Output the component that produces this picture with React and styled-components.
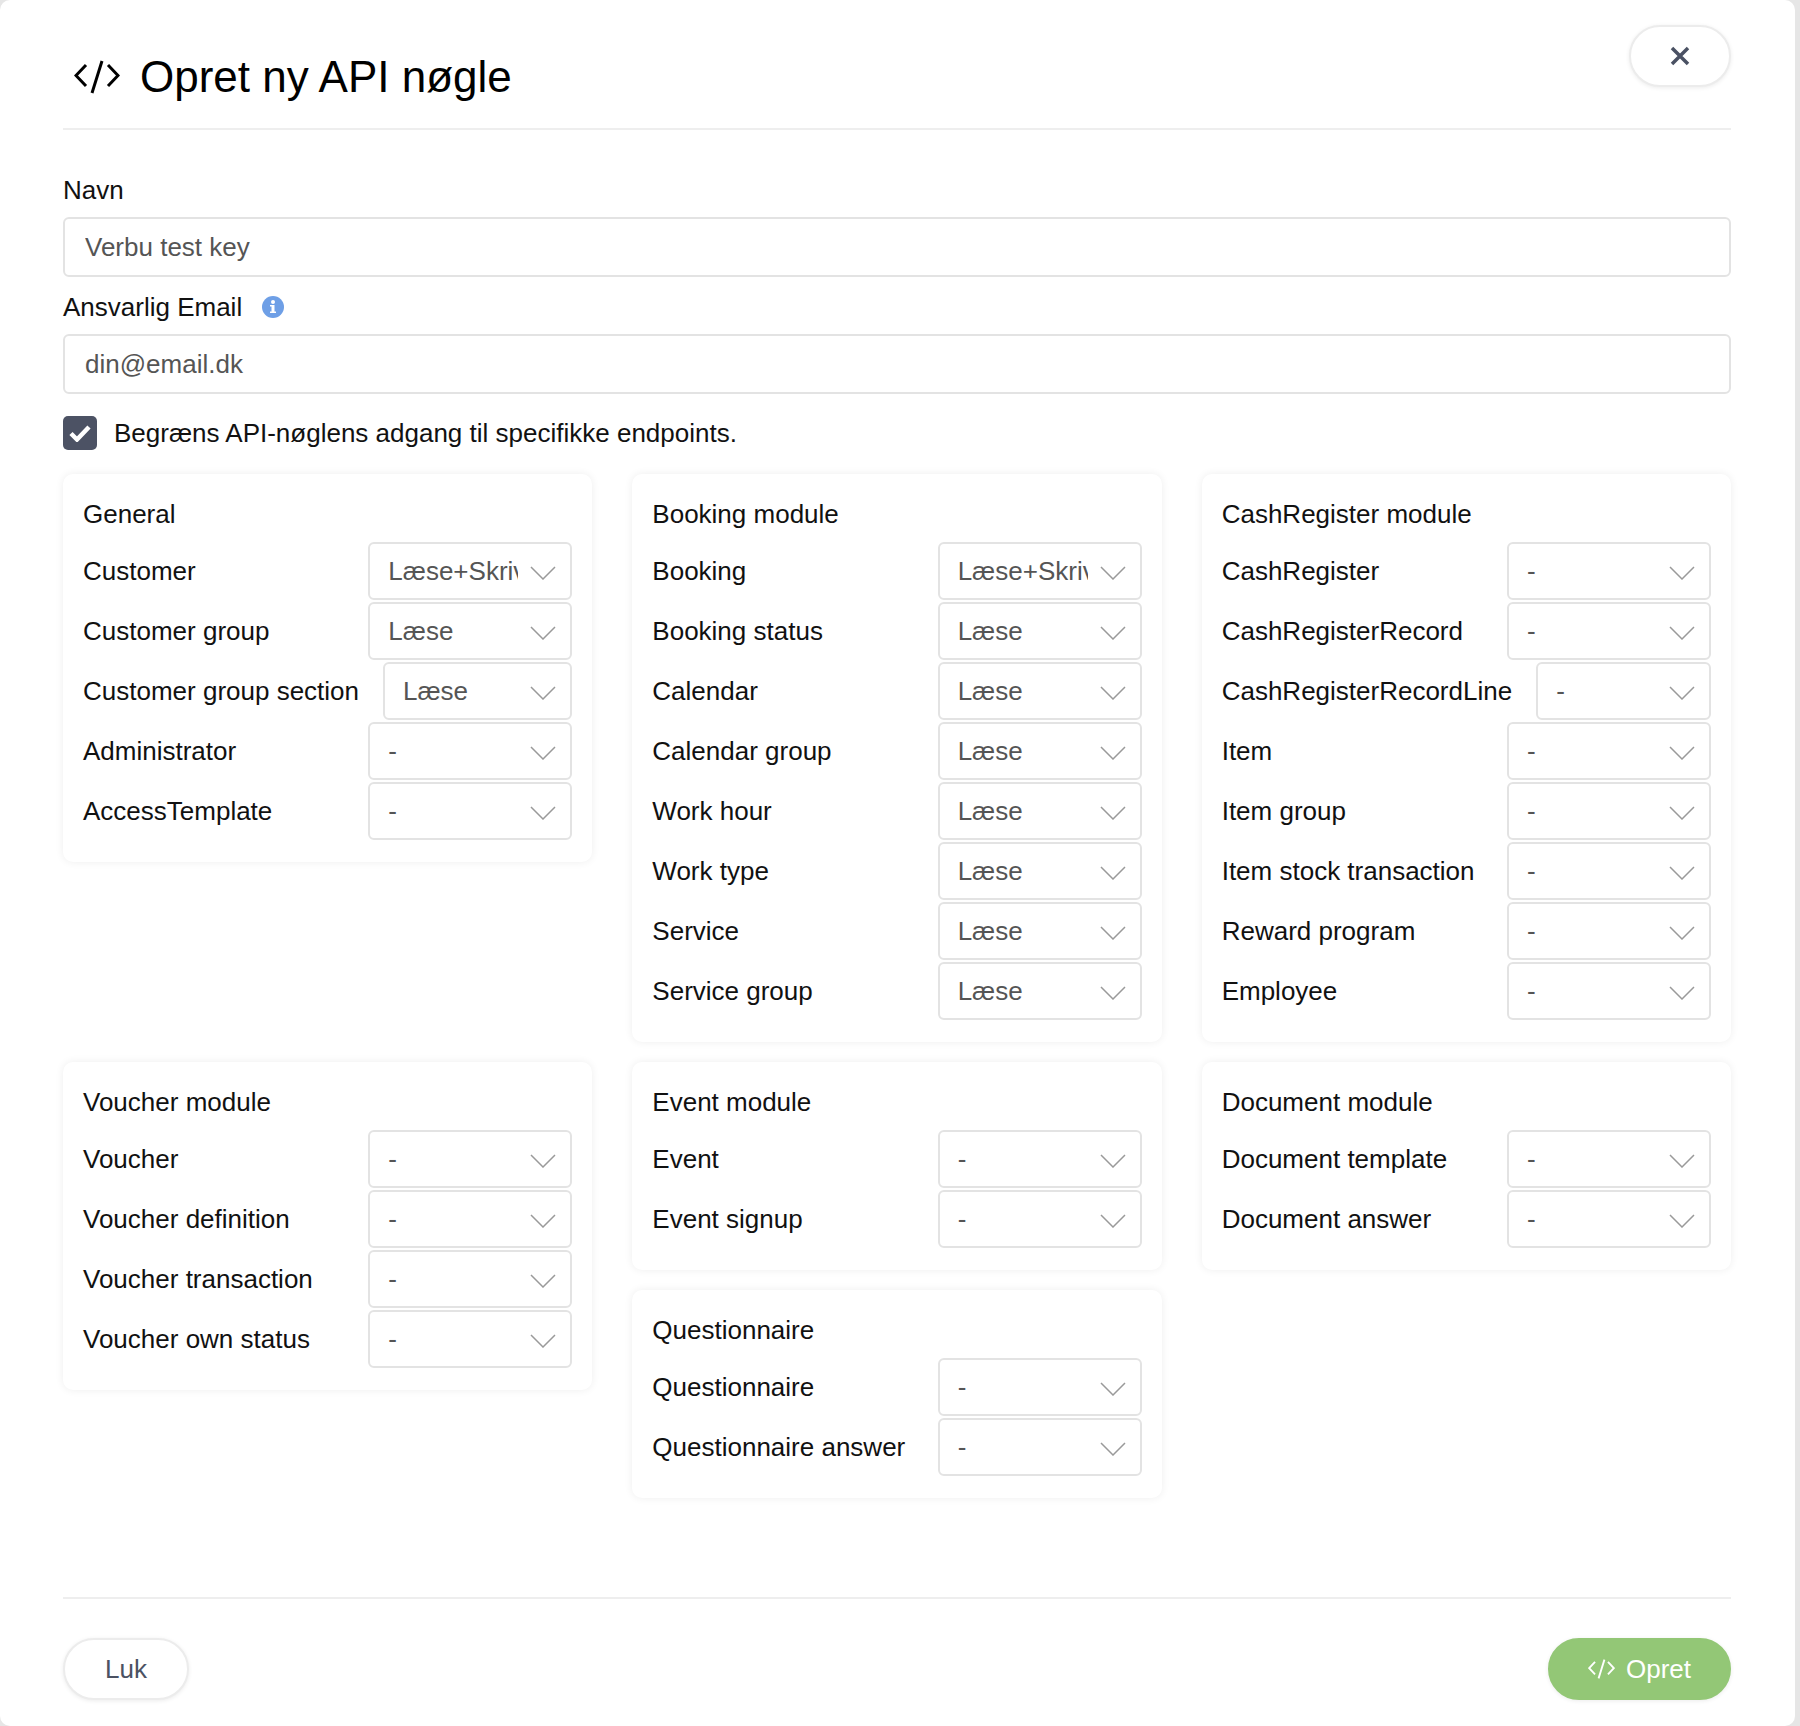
import React from "react";
import styled, { createGlobalStyle } from "styled-components";

const GlobalStyle = createGlobalStyle`
  * {
    box-sizing: border-box;
  }

  body {
    margin: 0;
    background: #e6e6e6;
    font-family: "Liberation Sans", Arial, Helvetica, sans-serif;
    color: #111;
  }
`;

const Modal = styled.div`
  display: flex;
  flex-direction: column;
  width: 1795px;
  min-height: 1726px;
  padding: 0 64px 0 63px;
  background: #fff;
  border-radius: 10px;
`;

const Header = styled.header`
  display: flex;
  justify-content: space-between;
  align-items: flex-start;
  height: 130px;
  border-bottom: 2px solid #eeeeee;
`;

const Title = styled.h1`
  display: flex;
  align-items: center;
  gap: 20px;
  margin: 51px 0 0 11px;
  font-size: 44px;
  font-weight: normal;
  line-height: 52px;
  color: #000;
`;

const CloseButton = styled.button`
  display: flex;
  align-items: center;
  justify-content: center;
  width: 102px;
  height: 62px;
  margin-top: 25px;
  background: #fff;
  border: 2px solid #ececec;
  border-radius: 31px;
  box-shadow: 0 1px 4px rgba(0, 0, 0, 0.08);
  cursor: pointer;
`;

const Body = styled.main`
  padding-top: 42px;
`;

const Label = styled.label`
  display: flex;
  align-items: center;
  gap: 20px;
  margin-bottom: 9px;
  font-size: 26px;
  line-height: 36px;
`;

const Input = styled.input`
  display: block;
  width: 100%;
  height: 60px;
  margin-bottom: 12px;
  padding: 0 20px;
  border: 2px solid #e3e3e3;
  border-radius: 6px;
  font-family: inherit;
  font-size: 26px;
  color: #555;
  outline: none;

  &::placeholder {
    color: #555;
  }
`;

const CheckRow = styled.div`
  display: flex;
  align-items: center;
  gap: 17px;
  margin-top: 22px;
  font-size: 26px;
`;

const CheckBox = styled.span`
  display: flex;
  align-items: center;
  justify-content: center;
  width: 34px;
  height: 34px;
  background: #4c5264;
  border-radius: 5px;
`;

const Modules = styled.div`
  display: grid;
  grid-template-columns: repeat(3, 1fr);
  column-gap: 40px;
  row-gap: 20px;
  margin-top: 24px;
`;

const Column = styled.div`
  display: flex;
  flex-direction: column;
  gap: 20px;
`;

const Card = styled.section`
  padding: 20px 20px 22px;
  background: #fff;
  border-radius: 10px;
  box-shadow: 0 0 8px rgba(0, 0, 0, 0.07);
`;

const CardTitle = styled.h2`
  margin: 0 0 8px;
  font-size: 26px;
  font-weight: normal;
  line-height: 40px;
`;

const Rows = styled.div`
  display: flex;
  flex-direction: column;
  gap: 2px;
`;

const Row = styled.div`
  display: flex;
  align-items: center;
  height: 58px;
`;

const RowLabel = styled.span`
  flex: 0 0 auto;
  margin-right: 24px;
  font-size: 26px;
  white-space: nowrap;
`;

const Select = styled.div`
  display: flex;
  align-items: center;
  flex: 0 1 204px;
  min-width: 0;
  height: 58px;
  margin-left: auto;
  padding: 0 14px 0 18px;
  border: 2px solid #e3e3e3;
  border-radius: 6px;
  font-size: 26px;
  color: #555;
`;

const SelectValue = styled.span`
  flex: 1;
  min-width: 0;
  margin-right: 12px;
  overflow: hidden;
  white-space: nowrap;
  text-overflow: clip;
`;

const Footer = styled.footer`
  display: flex;
  justify-content: space-between;
  align-items: center;
  margin-top: auto;
  padding: 39px 0 26px;
  border-top: 2px solid #eeeeee;
`;

const Button = styled.button`
  display: flex;
  align-items: center;
  justify-content: center;
  gap: 11px;
  height: 62px;
  padding: 0 ${(p) => (p.$primary ? "38px" : "40px")};
  background: ${(p) => (p.$primary ? "#93c776" : "#fff")};
  border: 2px solid ${(p) => (p.$primary ? "#93c776" : "#ececec")};
  border-radius: 31px;
  box-shadow: 0 1px 4px rgba(0, 0, 0, 0.08);
  font-family: inherit;
  font-size: 26px;
  color: ${(p) => (p.$primary ? "#fff" : "#4b5263")};
  cursor: pointer;
`;

const CodeIcon = ({ width = 46, height = 34, color = "#000", stroke = 3 }) => (
  <svg width={width} height={height} viewBox="0 0 46 34" fill="none">
    <polyline points="12,5 2,15.5 12,26" stroke={color} strokeWidth={stroke} />
    <line x1="28" y1="1" x2="18" y2="33" stroke={color} strokeWidth={stroke} />
    <polyline points="34,5 44,15.5 34,26" stroke={color} strokeWidth={stroke} />
  </svg>
);

const CloseIcon = () => (
  <svg width="20" height="20" viewBox="0 0 20 20">
    <path d="M2 2L18 18M18 2L2 18" stroke="#4a5163" strokeWidth="3.5" />
  </svg>
);

const InfoIcon = () => (
  <svg width="22" height="22" viewBox="0 0 22 22">
    <circle cx="11" cy="11" r="11" fill="#6e9fe6" />
    <circle cx="11" cy="6" r="2" fill="#fff" />
    <path d="M8 9h4.5v6.5H14V17H8v-1.5h1.5v-5H8z" fill="#fff" />
  </svg>
);

const CheckIcon = () => (
  <svg width="22" height="18" viewBox="0 0 22 18">
    <path d="M2 9.5l6 6L20 3" stroke="#fff" strokeWidth="4.5" fill="none" />
  </svg>
);

const Chevron = () => (
  <svg width="26" height="14" viewBox="0 0 26 14" style={{ flex: "none", marginTop: 4 }}>
    <polyline points="1,1 13,13 25,1" stroke="#9a9a9a" strokeWidth="1.5" fill="none" />
  </svg>
);

const modules = [
  [
    {
      title: "General",
      rows: [
        ["Customer", "Læse+Skriv"],
        ["Customer group", "Læse"],
        ["Customer group section", "Læse"],
        ["Administrator", "-"],
        ["AccessTemplate", "-"],
      ],
    },
  ],
  [
    {
      title: "Booking module",
      rows: [
        ["Booking", "Læse+Skriv"],
        ["Booking status", "Læse"],
        ["Calendar", "Læse"],
        ["Calendar group", "Læse"],
        ["Work hour", "Læse"],
        ["Work type", "Læse"],
        ["Service", "Læse"],
        ["Service group", "Læse"],
      ],
    },
  ],
  [
    {
      title: "CashRegister module",
      rows: [
        ["CashRegister", "-"],
        ["CashRegisterRecord", "-"],
        ["CashRegisterRecordLine", "-"],
        ["Item", "-"],
        ["Item group", "-"],
        ["Item stock transaction", "-"],
        ["Reward program", "-"],
        ["Employee", "-"],
      ],
    },
  ],
  [
    {
      title: "Voucher module",
      rows: [
        ["Voucher", "-"],
        ["Voucher definition", "-"],
        ["Voucher transaction", "-"],
        ["Voucher own status", "-"],
      ],
    },
  ],
  [
    {
      title: "Event module",
      rows: [
        ["Event", "-"],
        ["Event signup", "-"],
      ],
    },
    {
      title: "Questionnaire",
      rows: [
        ["Questionnaire", "-"],
        ["Questionnaire answer", "-"],
      ],
    },
  ],
  [
    {
      title: "Document module",
      rows: [
        ["Document template", "-"],
        ["Document answer", "-"],
      ],
    },
  ],
];

const ModuleCard = ({ title, rows }) => (
  <Card>
    <CardTitle>{title}</CardTitle>
    <Rows>
      {rows.map(([label, value]) => (
        <Row key={label}>
          <RowLabel>{label}</RowLabel>
          <Select>
            <SelectValue>{value}</SelectValue>
            <Chevron />
          </Select>
        </Row>
      ))}
    </Rows>
  </Card>
);

const App = () => {
  return (
    <>
      <GlobalStyle />
      <Modal>
        <Header>
          <Title>
            <CodeIcon />
            Opret ny API nøgle
          </Title>
          <CloseButton aria-label="Luk">
            <CloseIcon />
          </CloseButton>
        </Header>

        <Body>
          <Label>Navn</Label>
          <Input placeholder="Verbu test key" />
          <Label>
            Ansvarlig Email
            <InfoIcon />
          </Label>
          <Input placeholder="din@email.dk" />

          <CheckRow>
            <CheckBox>
              <CheckIcon />
            </CheckBox>
            Begræns API-nøglens adgang til specifikke endpoints.
          </CheckRow>

          <Modules>
            {modules.map((column, i) => (
              <Column key={i}>
                {column.map((mod) => (
                  <ModuleCard key={mod.title} {...mod} />
                ))}
              </Column>
            ))}
          </Modules>
        </Body>

        <Footer>
          <Button>Luk</Button>
          <Button $primary>
            <CodeIcon width={27} height={20} color="#fff" stroke={3.2} />
            Opret
          </Button>
        </Footer>
      </Modal>
    </>
  );
};

export default App;
